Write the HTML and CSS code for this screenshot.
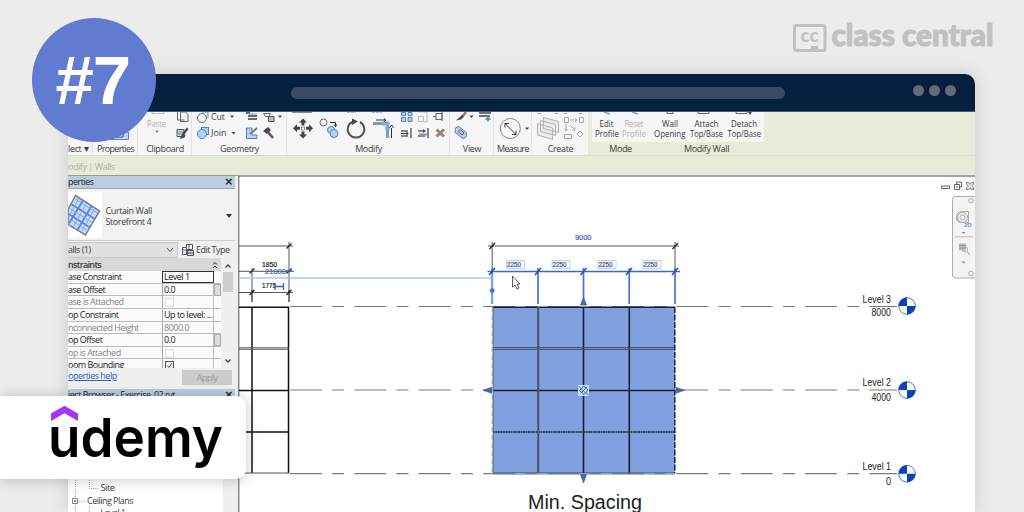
FILE: index.html
```html
<!DOCTYPE html>
<html lang="en">
<head>
<meta charset="utf-8">
<title>Class Central</title>
<link rel="stylesheet" href="styles.css">
</head>
<body>
<main class="banner">
  <header class="brand">
    <svg width="204" height="32" viewBox="792 22 204 32">
      <rect x="794.5" y="25.5" width="30.5" height="25" rx="2" class="brand-frame"/>
      <path d="M811 50v-4h7v4z" class="brand-fill"/>
      <text x="800.5" y="42.3" textLength="18" lengthAdjust="spacingAndGlyphs" class="brand-cc">cc</text>
      <text x="831.5" y="46.3" textLength="162" lengthAdjust="spacingAndGlyphs" class="brand-name">class central</text>
    </svg>
  </header>

  <section class="window">
    <div class="titlebar">
      <span class="address"></span>
      <span class="dots"><i></i><i></i><i></i></span>
    </div>
    <div class="app">
      <div class="ribbon">
        <div class="group g-select"><div class="tools"></div><div class="label">lect <span class="caret">▾</span></div></div>
        <div class="group g-props">
          <svg class="tools" viewBox="93 112 45 30"><path d="M93 132h35.500v7.500H93z" fill="#bcd4f4" stroke="#5c86c8"/><path d="M112 129h11v8h-11z" fill="#fff" stroke="#445"/><path d="M116 133h5" stroke="#446"/></svg>
          <div class="label">Properties</div>
        </div>
        <div class="group g-clip">
          <svg class="tools" viewBox="138 112 54 30">
            <path d="M152 112v1.500h12V112" class="pale"/>
            <text x="147" y="126.500" textLength="19" lengthAdjust="spacingAndGlyphs" class="txt off">Paste</text>
            <path d="M155 130.500h4l-2 2.500z" fill="#888"/>
            <path d="M177.500 112v8h7M180.500 112h5l2.500 2.500v7h-7.500z" class="ico"/>
            <path d="M177 129.500h7v7h-7z" fill="#d3dae0" stroke="#555"/><path d="M178 132h5m-5 2h4" stroke="#6a87a8"/><path d="M187 127.500l-5 6 2 1.500 4.500-6zM182 134l-2 5 4.500-1.500 1-2.500z" class="dark"/>
          </svg>
          <div class="label">Clipboard</div>
        </div>
        <div class="group g-geo">
          <svg class="tools" viewBox="192 112 95 30">
            <circle cx="202" cy="118" r="4.500" class="ico"/><path d="M202 112h6v6" class="blue-line"/>
            <text x="211" y="119.500" textLength="14" lengthAdjust="spacingAndGlyphs" class="txt">Cut</text><path d="M230 115.500h4l-2 2.500z" class="dark"/>
            <rect x="201.500" y="127.500" width="7" height="7" class="blue-fill"/><circle cx="202" cy="134" r="4.500" class="blue-fill"/>
            <text x="211" y="136.300" textLength="15.500" lengthAdjust="spacingAndGlyphs" class="txt">Join</text><path d="M231.500 132h4l-2 2.500z" class="dark"/>
            <path d="M246 113h4m-2 3h9m-9 3h9" stroke="#666" stroke-width="2"/><path d="M249 114h8" stroke="#609ad8"/>
            <path d="M246.500 128v10.500H257V135h-5v-7z" class="blue-fill"/><path d="M250 134l7-6" stroke="#8a7c66" stroke-width="2"/>
            <path d="M263.500 113.500h7l-2 3h-3z" class="ico"/><path d="M268.500 116.500h5.500v5h-5.500z" fill="#bbb" stroke="#555"/><path d="M278 115.500h4l-2 2.500z" class="dark"/>
            <path d="M263 131l5-4 3 3-4 4z" class="dark"/><path d="M268 132l5 6" stroke="#555" stroke-width="2.500"/>
          </svg>
          <div class="label">Geometry</div>
        </div>
        <div class="group g-modify">
          <svg class="tools" viewBox="287 112 163 30">
            <path d="M292 112.500h20" stroke="#888"/>
            <path d="M293 128.300l4-4v2.500h3v3h-3v2.500zM313 128.300l-4-4v2.500h-3v3h3v2.500zM303 118.500l4 4h-2.500v3h-3v-3H299zM303 138.500l4-4h-2.500v-3h-3v3H299z" fill="#3d444b"/><path d="M301.500 127h3v3h-3z" fill="#fff" stroke="#777" stroke-width=".8"/>
            <circle cx="323.500" cy="122.500" r="3.500" class="ico"/><path d="M330 122.500h5.500v3" fill="none" stroke="#333"/><path d="M333.500 124.500h4l-2 3z" class="dark"/>
            <circle cx="331" cy="130" r="3.500" class="blue-fill"/><circle cx="334" cy="133.500" r="4" class="blue-fill"/>
            <path d="M352 122a8.300 8.300 0 1 0 8 0" fill="none" stroke="#50565b" stroke-width="2"/><path d="M352 118.500l6 3-6 3.500z" class="dark"/>
            <path d="M347 112h9m16 0h10" stroke="#777" stroke-dasharray="3 1"/>
            <path d="M373 123.500h12M387.500 130v8" stroke="#999" stroke-width="3"/><path d="M382 123.500h5.500v7" fill="none" stroke="#7aa9e8" stroke-width="4"/><path d="M376 120h10m-2-1.500 2 1.500-2 1.500m7.500 6.500v10M389.500 128l2-3 2 3" fill="none" stroke="#333"/>
            <path d="M401.500 112.500h4v3h-4zm6.500 0h4v3h-4zm-6.500 5h4v4h-4zm6.500 0h4v4h-4z" class="blue-fill"/>
            <path d="M418.500 116.500h5v5h-5zM418 112h9v10h-3" class="pale"/><path d="M436 113v7m0-6.500h6v6h-6M442 112v9M433 116.500h3" class="ico"/>
            <path d="M401 131h7m-7 5h7m3-8v10" stroke="#888" stroke-width="2"/><path d="M401 133.500h7m-2-2 2 2-2 2" fill="none" stroke="#333"/>
            <path d="M418 131h7m-7 5h7m3-8v10" stroke="#888" stroke-width="2"/><path d="M419 134.500h8" stroke="#6b9de0" stroke-width="2"/><path d="M423 129l3 2-3 2z" class="dark"/>
            <path d="M436.500 129.500l7.500 7m0-7-7.500 7" stroke="#a08272" stroke-width="3"/>
          </svg>
          <div class="label">Modify</div>
        </div>
        <div class="group g-view">
          <svg class="tools" viewBox="450 112 44 30">
            <path d="M466 112l-4 5" stroke="#9a755d" stroke-width="2.500"/><path d="M462 115l-6 5.500 5-1 3-3z" class="dark"/><path d="M469.500 115.500h4l-2 2.500z" class="dark"/>
            <path d="M479 113h12m-12 3h11" stroke="#444" stroke-width="1.500"/><path d="M485.500 119h5m-2.500-2.500v5" stroke="#3f77c8" stroke-width="1.500"/>
            <path d="M455.500 128l3-1.500 8 6-.500 4.500-3 1.500-8-6z" class="blue-fill"/><path d="M458 131.500l2-2 4 3.500-2 2z" fill="none" stroke="#456"/>
          </svg>
          <div class="label">View</div>
        </div>
        <div class="group g-measure">
          <svg class="tools" viewBox="494 112 38 30"><circle cx="510.300" cy="128.500" r="10" fill="#fafafa" stroke="#858585"/><path d="M505 123.500l11 11m-11-7v-4h4m7 7v4h-4" fill="none" stroke="#333"/><path d="M525 127.500h4l-2 2.500z" class="dark"/></svg>
          <div class="label">Measure</div>
        </div>
        <div class="group g-create">
          <svg class="tools" viewBox="532 112 57 30">
            <path d="M538 113.500h3m14 0h3m6 0h3m12 0h3" stroke="#aaa"/>
            <path d="M543.500 117.500l15 4v11l-15-4zM540.500 120.500l15 4v11l-15-4zM537.500 123.500l15 4.500v11.500l-15-4.500z" fill="#ececec" stroke="#b5b5b5"/>
            <path d="M564.500 117.500h4v5h-4zm15 0h4v5h-4zM564.500 134.500h7v4h-7zM580 131l3 3-3 3-3-3zM570 120h7m-2-2 2 2-2 2M566 124v7m-1.500-2 1.500 2 1.500-2M570 125l5 5m0-3v3h-3" fill="none" stroke="#aaa"/>
          </svg>
          <div class="label">Create</div>
        </div>
        <div class="group g-mode">
          <svg class="tools" viewBox="592 112 57 30">
            <path d="M604 112l6 2m22-2 6 2" stroke="#7da2d4" stroke-width="1.500"/>
            <text x="599.500" y="126.500" textLength="14" lengthAdjust="spacingAndGlyphs" class="txt">Edit</text><text x="595" y="137" textLength="24" lengthAdjust="spacingAndGlyphs" class="txt">Profile</text>
            <text x="624.500" y="126.500" textLength="19" lengthAdjust="spacingAndGlyphs" class="txt off">Reset</text><text x="622" y="137" textLength="24" lengthAdjust="spacingAndGlyphs" class="txt off">Profile</text>
          </svg>
          <div class="label">Mode</div>
        </div>
        <div class="group g-wall">
          <svg class="tools" viewBox="649 112 115 30">
            <path d="M667 112v1.500h6V112m25 0v1.500h11V112m27 0v1.500h11V112" class="ico"/><path d="M748 112h4l-2 3z" class="dark"/>
            <text x="662" y="126.500" textLength="16" lengthAdjust="spacingAndGlyphs" class="txt">Wall</text><text x="654" y="137" textLength="31.500" lengthAdjust="spacingAndGlyphs" class="txt">Opening</text>
            <text x="694.500" y="126.500" textLength="24" lengthAdjust="spacingAndGlyphs" class="txt">Attach</text><text x="690" y="137" textLength="33" lengthAdjust="spacingAndGlyphs" class="txt">Top/Base</text>
            <text x="731" y="126.500" textLength="26" lengthAdjust="spacingAndGlyphs" class="txt">Detach</text><text x="727.500" y="137" textLength="33.500" lengthAdjust="spacingAndGlyphs" class="txt">Top/Base</text>
          </svg>
          <div class="label">Modify Wall</div>
        </div>
      </div>
      <div class="options">odify | Walls</div>

      <div class="workspace">
        <aside class="panel">
          <div class="panel-title"><span>perties</span><span class="close">×</span></div>
          <div class="type">
            <svg width="34" height="46" viewBox="68 192 34 46"><rect x="68" y="192" width="34" height="46" fill="#fff"/>
              <path d="M75.500 195.500l24 15.500-14 24L68 224.500v-15z" fill="#c5daf5" stroke="#778087" stroke-width="1.500"/>
              <path d="M83 200.500l-14 23M91.500 206l-14 24M71 204l24 15M68 213.500l22 14" stroke="#5887d5" stroke-width="1.800"/>
              <path d="M74 198l23 15M69 208l24 15M68 218l20 13M79 198l-11 20M87 203l-14 24M95 208l-13 23" stroke="#7aa2e4" stroke-width=".9"/></svg>
            <div class="type-name"><span>Curtain Wall</span><span>Storefront 4</span></div>
            <svg class="type-arrow" width="6" height="4"><path d="M0 0h6L3 4z" fill="#333"/></svg>
          </div>
          <div class="filter">
            <div class="select"><span>alls (1)</span><svg width="8" height="6"><path d="M1 1l3 3.500L7 1" fill="none" stroke="#555"/></svg></div>
            <svg width="12" height="12"><path d="M.5 3.500h4v7h-4zM4.500.5h6v5h-6zM.5 6h4M7 .5v5" fill="#fff" stroke="#555"/><path d="M5.500 6.500h6v5h-6zM5 9h6" fill="#c4d8f2" stroke="#456"/></svg>
            <span class="edit">Edit Type</span>
          </div>
          <div class="grid">
            <div class="rows">
              <div class="section"><span>nstraints</span><svg width="6" height="8"><path d="M1 3.500l2-2 2 2M1 7l2-2 2 2" fill="none" stroke="#222"/></svg></div>
              <div class="row"><span>ase Constraint</span><span class="focus">Level 1</span><i></i></div>
              <div class="row"><span>ase Offset</span><span>0.0</span><i class="btn"></i></div>
              <div class="row dim"><span>ase is Attached</span><span><b class="check"></b></span><i></i></div>
              <div class="row"><span>op Constraint</span><span>Up to level: ...</span><i></i></div>
              <div class="row dim"><span>nconnected Height</span><span>8000.0</span><i></i></div>
              <div class="row"><span>op Offset</span><span>0.0</span><i class="btn"></i></div>
              <div class="row dim"><span>op is Attached</span><span><b class="check"></b></span><i></i></div>
              <div class="row"><span>oom Bounding</span><span><b class="check on"><svg width="7" height="7"><path d="M1 3.500l2 2L6 1" fill="none" stroke="#444"/></svg></b></span><i></i></div>
            </div>
            <div class="scroll"><svg width="8" height="6"><path d="M1.500 4.500L4 2l2.500 2.500" fill="none" stroke="#444" stroke-width="1.300"/></svg><i></i><svg width="8" height="6"><path d="M1.500 1.500L4 4l2.500-2.500" fill="none" stroke="#444" stroke-width="1.300"/></svg></div>
          </div>
          <div class="help"><span class="link">operties help</span><span class="apply">Apply</span></div>
          <div class="panel-title browser"><span>ject Browser - Exercise_02.rvt</span><span class="close">×</span></div>
          <svg class="tree" width="167" height="111" viewBox="68 401 167 111">
            <rect x="68" y="401" width="155" height="111" fill="#fff"/>
            <path d="M75.500 470v42M89.500 470v18.500h9M79 501.500h6M89.500 507v5" fill="none" stroke="#aaa" stroke-dasharray="1 1"/>
            <rect x="72.500" y="498.500" width="5" height="5" fill="#fff" stroke="#888"/><path d="M74 501h2.500" stroke="#333"/>
            <text x="100.500" y="491" textLength="14" lengthAdjust="spacingAndGlyphs" class="txt">Site</text>
            <text x="87" y="503.500" textLength="46" lengthAdjust="spacingAndGlyphs" class="txt">Ceiling Plans</text>
            <text x="100.500" y="516" textLength="25" lengthAdjust="spacingAndGlyphs" class="txt">Level 1</text>
          </svg>
        </aside>

        <svg class="drawing" width="737" height="337" viewBox="238 175 737 337">
          <rect x="238" y="175" width="737" height="337" fill="#fff"/>
          <path d="M238.700 512V176h737" fill="none" stroke="#85878a" stroke-width="1.500"/>

          <!-- level lines -->
          <g stroke="#777b7c" stroke-width="1.200" stroke-dasharray="32 10.200 12 10.200">
            <path d="M289.900 306.500H897M289.900 390H897M289.900 473.700H897"/>
          </g>

          <!-- wall elevation on the left -->
          <path d="M239 307.200h50M239 390.500h50M239 432h50M252 307v166M288.500 307v166" stroke="#111" stroke-width="1.500"/>
          <path d="M239 347.800h50m-50 1.500h50M239 473h50" stroke="#555"/>
          <path d="M239 246h54M239 271.300h55M239 292.500h54M252 268v23M289 242v50" stroke="#444" stroke-width=".9"/>
          <path d="M252 290v12M289 290v12M249.500 273.500l5-5M286.500 273.500l5-5M286.500 248.500l5-5M249.500 295l5-5M286.500 295l5-5" stroke="#222" stroke-width="1.200"/>
          <path d="M239 278h253" stroke="#a5cdf7" stroke-width="1.500"/>
          <text x="262" y="266.500" textLength="15" lengthAdjust="spacingAndGlyphs" class="dimtext">1850</text>
          <text x="265" y="273.800" textLength="21" lengthAdjust="spacingAndGlyphs" class="dimtext blue">21000</text>
          <text x="262" y="287.500" textLength="14" lengthAdjust="spacingAndGlyphs" class="dimtext">1775</text>
          <path d="M275 286.500h8.500M275 283v7M283.500 283v7M286 271h6" stroke="#3464c4" stroke-width="1.300"/>

          <!-- selected curtain wall -->
          <rect x="493" y="307" width="182" height="166" fill="#80a0e0"/>
          <path d="M493 307.200h182M493 390.500h182M583.500 307v166M629.300 307v166" stroke="#142136" stroke-width="1.600"/>
          <path d="M493 347.600h182M493 349.400h182M493 473h182" stroke="#3b4656" stroke-width=".9"/>
          <path d="M493 432h182" stroke="#142136" stroke-width="1.500" stroke-dasharray="2 .5"/>
          <path d="M538.200 307v166" stroke="#4b5360" stroke-width="2"/>
          <path d="M493.200 307v166" stroke="#66727f" stroke-width="1.200"/><path d="M492.200 307v166" stroke="#9d9d83" stroke-width="1" stroke-dasharray="5 3"/>
          <path d="M674.800 307v166" stroke="#152640" stroke-width="1.500" stroke-dasharray="6 1.500"/>
          <path d="M493 474h182" stroke="#818b95" stroke-width="1.200"/><path d="M515 474h9m14 0h4m60 0h9m35 0h8m15 0h5" stroke="#83b4f5"/>
          <g fill="#4568b4" stroke="#2f5096" stroke-width=".6"><path d="M583.500 297l3 8h-6zM583.500 483l3-8.500h-6zM483 390.300l8.500-3v6zM684.500 390.300l-8.500-3v6z"/></g>
          <rect x="578" y="385" width="11" height="11" fill="#c8dffb"/>
          <path d="M579.500 390.500l4-4.500 4.500 4-4 4.500zM581 388.500l4.500 4.500M580.500 393.500l6.500-6.500M579 386.500l2 2m5 4.500 2.500 2" fill="none" stroke="#3f65ab"/>

          <!-- dimensions -->
          <path d="M488 246h191M492.200 242v28M675 242v28" stroke="#444" stroke-width=".9"/>
          <path d="M489.500 249l5.500-6M672.500 249l5.500-6" stroke="#222" stroke-width="1.300"/>
          <path d="M487.500 271.500h192.500" stroke="#3e69be" stroke-width="1.700"/>
          <path d="M492.200 268v36M538 268v36M583.500 268v30M629.200 268v36M675 268v36" stroke="#4a73c2" stroke-width="1.700"/>
          <path d="M489 275l6-7M535 275l6-7M580.500 275l6-7M626 275l6-7M672 275l6-7" stroke="#274e9d" stroke-width="1.500"/>
          <path d="M492.200 275v28" stroke="#78a5ee" stroke-width="2"/><circle cx="492.200" cy="290.600" r="2.400" fill="#4b70c6"/>
          <g fill="#fff" stroke="#a9c4de" stroke-width=".8"><path d="M506.500 260.500h18v8h-18zM552 260.500h18v8h-18zM598 260.500h18v8h-18zM643 260.500h18v8h-18z"/></g>
          <text x="575" y="240.300" textLength="16.500" lengthAdjust="spacingAndGlyphs" class="dimtext blue">9000</text>
          <g class="dimtext navy"><text x="507" y="266.800" textLength="14" lengthAdjust="spacingAndGlyphs">2250</text><text x="552.500" y="266.800" textLength="14" lengthAdjust="spacingAndGlyphs">2250</text><text x="598.500" y="266.800" textLength="14" lengthAdjust="spacingAndGlyphs">2250</text><text x="643.500" y="266.800" textLength="14" lengthAdjust="spacingAndGlyphs">2250</text></g>
          <path d="M512.500 276v11l2.500-2 2 4 2-1-2-4h3z" fill="#fff" stroke="#444" stroke-width=".9"/>
          <text x="528" y="509" textLength="114" lengthAdjust="spacingAndGlyphs" class="caption">Min. Spacing</text>

          <!-- level heads -->
          <g class="level">
            <text x="862.500" y="302.500" textLength="28.500" lengthAdjust="spacingAndGlyphs">Level 3</text><text x="871.500" y="316.300" textLength="19.500" lengthAdjust="spacingAndGlyphs">8000</text>
            <text x="862.500" y="385.900" textLength="28.500" lengthAdjust="spacingAndGlyphs">Level 2</text><text x="871.500" y="400.500" textLength="19.500" lengthAdjust="spacingAndGlyphs">4000</text>
            <text x="862.500" y="469.900" textLength="28.500" lengthAdjust="spacingAndGlyphs">Level 1</text><text x="886" y="484.500" textLength="5" lengthAdjust="spacingAndGlyphs">0</text>
          </g>
          <g fill="#fff" stroke="#3565c4" stroke-width=".9"><circle cx="907" cy="306" r="8.300"/><circle cx="907" cy="390" r="8.300"/><circle cx="907" cy="473.700" r="8.300"/></g>
          <path d="M907 306v-8.500a8.500 8.500 0 0 0-8.500 8.500zv8.500a8.500 8.500 0 0 0 8.500-8.500zM907 390v-8.500a8.500 8.500 0 0 0-8.500 8.500zv8.500a8.500 8.500 0 0 0 8.500-8.500zM907 473.700v-8.500a8.500 8.500 0 0 0-8.500 8.500zv8.500a8.500 8.500 0 0 0 8.500-8.500z" fill="#0b43bd"/>

          <!-- view controls -->
          <path d="M941.500 186h8v2.500h-8zM954.500 184.500h5v5h-5zM956.500 184v-2h5v5h-2" fill="#fff" stroke="#59616b"/><path d="M956 187h2" stroke="#555"/>
          <path d="M966.500 182.500h2l1.500 2 1.500-2h2v1.500l-2 2 2 2v1.500h-2l-1.500-2-1.500 2h-2V188l2-2-2-2z" fill="#fff" stroke="#59616b" stroke-width=".9"/>
          <rect x="952.500" y="196.500" width="26" height="81.500" rx="3" fill="#f4f4f4" stroke="#aaa"/>
          <circle cx="971" cy="200.700" r="2.300" class="ico2"/><circle cx="971" cy="273.500" r="2.300" class="ico2"/>
          <path d="M956.500 220v-3q0-5.500 6-5.500h6v11h-5q-7 0-7-4" class="ico2"/><circle cx="962.500" cy="217.500" r="5" class="ico2"/><circle cx="962.500" cy="217.500" r="2.500" class="ico2"/>
          <text x="964" y="226.500" class="two">2D</text>
          <path d="M955 236.800h18" stroke="#bbb"/><path d="M961.500 232h4l-2 2zM961.500 261.500h4l-2 2z" fill="#888"/>
          <path d="M959 243.500h7v7h-7z" fill="#bbb"/><path d="M959 245.500h7m-7 2.500h7" stroke="#888" stroke-width=".7"/><circle cx="965" cy="249.500" r="2.500" class="ico2"/><path d="M967 251.500l2.500 3" stroke="#888"/>
        </svg>
      </div>
    </div>
  </section>

  <div class="rank">#7</div>
  <div class="provider">
    <svg width="246" height="83" viewBox="0 396 246 83">
      <path d="M51 413.500l13.500-7.700 13.500 7.700v7.500l-13.500-7.700L51 421z" fill="#a435f0"/>
      <text x="48" y="457" textLength="175" lengthAdjust="spacingAndGlyphs" class="udemy">udemy</text>
    </svg>
  </div>
</main>
</body>
</html>
```
FILE: styles.css
```css
* { box-sizing: border-box; }
body { margin: 0; }
.banner { position: relative; width: 1024px; height: 512px; overflow: hidden; background: #ececec; font-family: "Open Sans", "Noto Sans", sans-serif; color: #3c3c3c; }
svg { display: block; }
i, b { font-style: normal; font-weight: normal; }

.brand { height: 74px; padding: 22px 28px 0 0; display: flex; justify-content: flex-end; }
.brand svg { overflow: visible; }
.brand-frame { fill: none; stroke: #c1c1c1; stroke-width: 3; }
.brand-fill, .brand-cc, .brand-name { fill: #c1c1c1; }
.brand-cc { font: 900 18px Lato, sans-serif; }
.brand-name { font: 900 29.5px Lato, sans-serif; stroke: #c1c1c1; stroke-width: 1; }

.window { width: 907px; height: 438px; margin-left: 68px; border-radius: 10px 10px 0 0; box-shadow: 0 0 18px rgba(0, 0, 0, .15); overflow: hidden; }
.titlebar { height: 38px; background: #04203c; border-bottom: 1px solid #455a70; display: flex; align-items: center; padding: 0 19px 0 223px; }
.address { width: 494px; height: 12px; border-radius: 6px; background: #3a4c65; }
.dots { margin-left: auto; display: flex; gap: 5px; padding-bottom: 4px; }
.dots i { width: 11px; height: 11px; border-radius: 50%; background: #626b7d; }

.ribbon { height: 44px; display: flex; background: #e5ecd8; border-bottom: 1px solid #d8dfce; }
.group { height: 43px; background: #f6f6f6; box-shadow: inset -1px 0 #e5e5e5; flex: none; display: flex; flex-direction: column; }
.tools { width: 100%; height: 30px; flex: none; display: block; }
.label { height: 13px; line-height: 13px; text-align: center; font-size: 9px; letter-spacing: -.35px; white-space: nowrap; }
.g-select { width: 25px; }
.g-select .label { text-align: left; }
.caret { font-size: 10px; margin-left: 1px; }
.g-props { width: 45px; }
.g-props .label { letter-spacing: -.65px; }
.g-clip { width: 54px; }
.g-geo { width: 95px; }
.g-modify { width: 163px; }
.g-view { width: 44px; }
.g-measure { width: 38px; }
.g-measure .label { letter-spacing: -.7px; }
.g-create { width: 57px; margin-right: 3px; }
.g-mode { width: 57px; }
.g-wall { width: 115px; }
.g-mode, .g-wall { background: #e5ecd8; box-shadow: none; }
.g-mode .tools, .g-wall .tools { background: #f6f6f6; }
.txt { font-family: "Open Sans", sans-serif; font-size: 9px; fill: #3c3c3c; }
.txt.off { fill: #b0b0b0; }
.ico { fill: none; stroke: #666; }
.ico2 { fill: none; stroke: #aaa; }
.pale { fill: none; stroke: #bbb; }
.dark { fill: #484848; }
.blue-line { fill: none; stroke: #5c8bd0; }
.blue-fill { fill: #b8d1f3; stroke: #4f80c8; }
.options { height: 19px; line-height: 21px; background: #e5ecd8; color: #adb1a8; font-size: 9px; letter-spacing: -.45px; }

.workspace { display: flex; height: 337px; }
.panel { width: 170px; padding-right: 3px; background: #f0f0f0; border-top: 1px solid #999; font-size: 9px; letter-spacing: -.5px; display: flex; flex-direction: column; flex: none; white-space: nowrap; }
.panel-title { height: 13px; flex: none; background: #bccde2; color: #222; display: flex; justify-content: space-between; line-height: 12px; padding-right: 3px; border-bottom: 1px solid #99a6b6; }
.close { font: 13px/12px "Liberation Sans", sans-serif; -webkit-text-stroke: .4px #222; }
.type { height: 52px; flex: none; display: flex; align-items: center; background: #f1f2f2; border-bottom: 1px solid #ccc; }
.type-name { display: flex; flex-direction: column; line-height: 11.5px; margin-left: 3.5px; letter-spacing: -.4px; padding-top: 3px; }
.type-arrow { margin: 3px 3px 0 auto; }
.filter { height: 17px; flex: none; display: flex; align-items: center; }
.select { width: 110px; height: 16px; background: #e1e1e1; border: 1px solid #c6c6c6; border-left: 0; display: flex; align-items: center; justify-content: space-between; padding-right: 3px; margin-right: 4px; }
.edit { margin-left: 2px; letter-spacing: -.55px; }
.grid { height: 110px; flex: none; display: flex; overflow: hidden; }
.rows { width: 153px; }
.section { height: 13px; background: #d8d8d8; display: flex; align-items: center; justify-content: space-between; padding-right: 3px; font-weight: 600; letter-spacing: -.65px; }
.row { display: grid; grid-template-columns: 94px 52px 7px; height: 12.65px; line-height: 12px; border-bottom: 1px solid #bbb; color: #222; background: #fbfbfb; }
.row > span + span { border-left: 1px solid #aaa; border-right: 1px solid #bbb; padding-left: 1px; }
.row > .focus { border: 1px solid #333 !important; line-height: 10px; }
.row.dim { color: #858585; }
.btn { background: #ddd; border: 1px solid #aaa; }
.check { display: block; width: 9px; height: 9px; border: 1px solid #ddd; margin: 2px 0 0 1px; }
.check.on { border-color: #555; }
.scroll { width: 12px; margin-left: 1px; background: #f0f0f0; display: flex; flex-direction: column; align-items: center; padding: 5px 0 4px; }
.scroll i { width: 10px; height: 20px; margin: 3px 0 auto; background: #cdcdcd; }
.help { height: 21px; flex: none; display: flex; justify-content: space-between; padding: 2px 3px 4px 0; }
.link { color: #2b62c9; text-decoration: underline; line-height: 12px; }
.apply { width: 50px; height: 15px; background: #ccc; color: #999; text-align: center; line-height: 15px; }
.browser { height: 12px; }
.tree { flex: none; }
.drawing { flex: none; }
.dimtext { font: 7.5px "Liberation Sans", sans-serif; fill: #222; stroke: #222; stroke-width: .2; }
.dimtext.blue { fill: #3464c4; stroke: #3464c4; }
.dimtext.navy { fill: #29477e; stroke: #29477e; }
.caption { font: 20px "Liberation Sans", sans-serif; fill: #222; }
.level { font: 10px "Liberation Sans", sans-serif; fill: #222; }
.two { font: bold 6px "Liberation Sans", sans-serif; fill: #6b98d0; }

.rank { position: absolute; left: 32px; top: 18px; width: 124px; height: 124px; border-radius: 50%; background: #607bd0; color: #fff; font: bold 69px/125px "Liberation Sans", sans-serif; letter-spacing: -1px; padding-left: 23.5px; }
.provider { position: absolute; left: 0; top: 396px; width: 246px; height: 83px; border-radius: 0 10px 10px 0; background: #fff; box-shadow: 0 1px 14px rgba(0, 0, 0, .22); }
.udemy { font: 600 54px Inter, sans-serif; fill: #000; }
```
